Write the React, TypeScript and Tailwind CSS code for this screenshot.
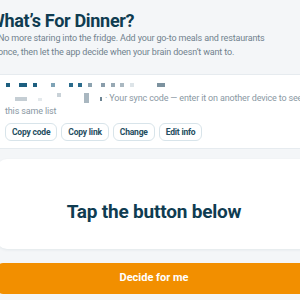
import React from "react";

const code1: [number, number, string][] = [
  [6, 4, "#1d5f80"], [19, 8, "#1d5f80"], [33, 4, "#1d5f80"], [51, 4, "#7fa3b6"],
  [69, 4, "#2a6b8c"], [78, 4, "#2a6b8c"], [88, 4, "#8da3b0"], [101, 4, "#8a9dab"],
  [111, 4, "#98a9b4"], [120, 4, "#aab8c1"], [130, 4, "#dde4e8"], [157, 8, "#7c929f"],
];

function CodeRow() {
  return (
    <svg width="170" height="5" className="block">
      {code1.map(([x, w, c], i) => (
        <rect key={i} x={x - 5} y="0" width={w} height="4" fill={c} />
      ))}
    </svg>
  );
}

function CodeBits() {
  return (
    <svg width="98" height="11" className="inline-block align-[-2px]">
      <rect x="10" y="5" width="12" height="4" fill="#c5ced4" />
      <rect x="33" y="6" width="4" height="3" fill="#e4e9ec" />
      <rect x="52" y="1" width="4" height="4" fill="#c9d2d8" />
      <rect x="79" y="1" width="5" height="10" fill="#a9b7c0" />
      <rect x="95" y="5" width="2" height="4" fill="#6d8594" />
    </svg>
  );
}

export default function App() {
  return (
    <div className="w-[300px] h-[300px] overflow-hidden bg-[#f4f6f8] font-['Roboto',sans-serif]">
      <div className="ml-[-3px] w-[314px] pt-[11px]">
        <h1 className="ml-[-8px] text-[18px] font-bold leading-[20px] tracking-[-0.3px] text-[#0f3c51]">
          What’s For Dinner?
        </h1>
        <p className="ml-[1px] w-[330px] text-[9px] leading-[14px] tracking-[-0.15px] text-[#71828e]">
          No more staring into the fridge. Add your go-to meals and restaurants
          <br />
          once, then let the app decide when your brain doesn’t want to.
        </p>

        <div className="mt-[15px] -mx-[6px] bg-white border-y border-[#e6ebef] px-[14px] pt-[8px] pb-[7px]">
          <CodeRow />
          <p className="mt-[4px] w-[320px] text-[9px] leading-[13px] tracking-[-0.15px] text-[#8a98a3]">
            <CodeBits /> · Your sync code — enter it on another device to see
            <br />
            this same list
          </p>
          <div className="mt-[5px] flex gap-[4px]">
            {["Copy code", "Copy link", "Change", "Edit info"].map((t) => (
              <button
                key={t}
                className="h-[18px] px-[6px] rounded-[6px] border border-[#d8e4ea] bg-white text-[8.5px] font-bold tracking-[-0.2px] text-[#244d60]"
              >
                {t}
              </button>
            ))}
          </div>
        </div>

        <div className="mt-[10px] h-[90px] pt-[16px] rounded-[10px] bg-white shadow-[0_1px_3px_rgba(15,60,81,0.08)] flex items-center justify-center">
          <span className="text-[19px] font-bold tracking-[-0.2px] text-[#0f3c51]">Tap the button below</span>
        </div>

        <button className="mt-[14px] w-full h-[31px] rounded-[6px] bg-[#f28f00] text-white text-[11px] font-bold">
          Decide for me
        </button>
      </div>
    </div>
  );
}
